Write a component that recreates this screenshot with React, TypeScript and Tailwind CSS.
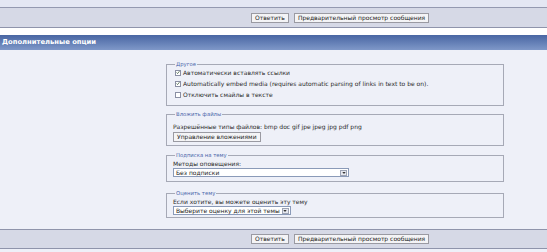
import type { ReactNode } from "react";

const FONT = { fontFamily: '"DejaVu Sans", Verdana, sans-serif' };

function Btn({ children }: { children: ReactNode }) {
  return (
    <button
      type="button"
      className="block h-[10px] whitespace-nowrap border border-[#9a9aa2] bg-[#f4f4f6] px-[3px] text-[6px] leading-[8px] text-[#222]"
    >
      {children}
    </button>
  );
}

function ButtonBar({ className = "" }: { className?: string }) {
  return (
    <div
      className={`flex h-[20px] items-center gap-[5px] border-b border-[#8f94ab] bg-[#d6d9e6] pl-[251px] ${className}`}
    >
      <Btn>Ответить</Btn>
      <Btn>Предварительный просмотр сообщения</Btn>
    </div>
  );
}

function Check({ checked }: { checked?: boolean }) {
  return (
    <span className="ml-[2px] mr-[2px] flex h-[6px] w-[6px] shrink-0 items-center justify-center border border-[#8a8fa3] bg-white">
      {checked && (
        <svg viewBox="0 0 6 6" className="h-[5px] w-[5px]">
          <path d="M0.8 3 L2.3 4.6 L5.2 1" fill="none" stroke="#2f4f2f" strokeWidth="1.1" />
        </svg>
      )}
    </span>
  );
}

function Select({ label, width }: { label: string; width: string }) {
  return (
    <div
      className={`flex h-[9px] items-center justify-between gap-[2px] border border-[#8a9ab8] bg-white pl-[2px] pr-[1px] ${width}`}
    >
      <span className="whitespace-nowrap text-[6px] leading-[7px] text-[#222]">{label}</span>
      <span className="flex h-[6px] w-[7px] shrink-0 items-center justify-center border border-[#9da3b4] bg-[#e6e8ef]">
        <svg viewBox="0 0 5 3" className="h-[2px] w-[4px]">
          <path d="M0 0 H5 L2.5 3 Z" fill="#333" />
        </svg>
      </span>
    </div>
  );
}

function Box({
  title,
  className = "",
  children,
}: {
  title: string;
  className?: string;
  children: ReactNode;
}) {
  return (
    <fieldset
      className={`w-[338px] border border-[#a6a9b6] px-[6px] text-[6px] leading-[8px] ${className}`}
    >
      <legend className="ml-[2px] px-[1px] text-[5.3px] leading-[6px] text-[#4a66aa]">
        {title}
      </legend>
      {children}
    </fieldset>
  );
}

export default function App() {
  return (
    <div
      className="h-[252px] w-full overflow-hidden bg-[#eef0f8] text-[#2a2a2a]"
      style={FONT}
    >
      <div className="h-[8px] border-b border-[#9499b0] bg-[#e4e7f3]" />
      <ButtonBar />
      <div className="h-[7px] bg-white" />
      <div className="flex h-[15px] items-center bg-gradient-to-b from-[#4966a3] to-[#7f98c8] pl-[2px] text-[6.8px] font-bold text-white">
        Дополнительные опции
      </div>

      <div className="flex flex-col pl-[166px] pt-[11px]">
        <Box title="Другое" className="pb-[5px]">
          <div className="flex flex-col leading-[11px]">
            <label className="flex items-center">
              <Check checked />
              Автоматически вставлять ссылки
            </label>
            <label className="flex items-center">
              <Check checked />
              Automatically embed media (requires automatic parsing of links in text to be on).
            </label>
            <label className="flex items-center">
              <Check />
              Отключить смайлы в тексте
            </label>
          </div>
        </Box>

        <Box title="Вложить файлы" className="mt-[5px] pb-[3px] pt-[4px]">
          <p className="leading-[11px]">
            Разрешённые типы файлов: bmp doc gif jpe jpeg jpg pdf png
          </p>
          <Btn>Управление вложениями</Btn>
        </Box>

        <Box title="Подписка на тему" className="mt-[6px] pb-[4px] pt-[2px]">
          <p>Методы оповещения:</p>
          <Select label="Без подписки" width="w-[176px]" />
        </Box>

        <Box title="Оценить тему" className="mt-[8px] pb-[2px] pt-[2px]">
          <p>Если хотите, вы можете оценить эту тему</p>
          <Select label="Выберите оценку для этой темы" width="w-fit" />
        </Box>
      </div>

      <ButtonBar className="mt-[11px] h-[19px] border-t" />
    </div>
  );
}
